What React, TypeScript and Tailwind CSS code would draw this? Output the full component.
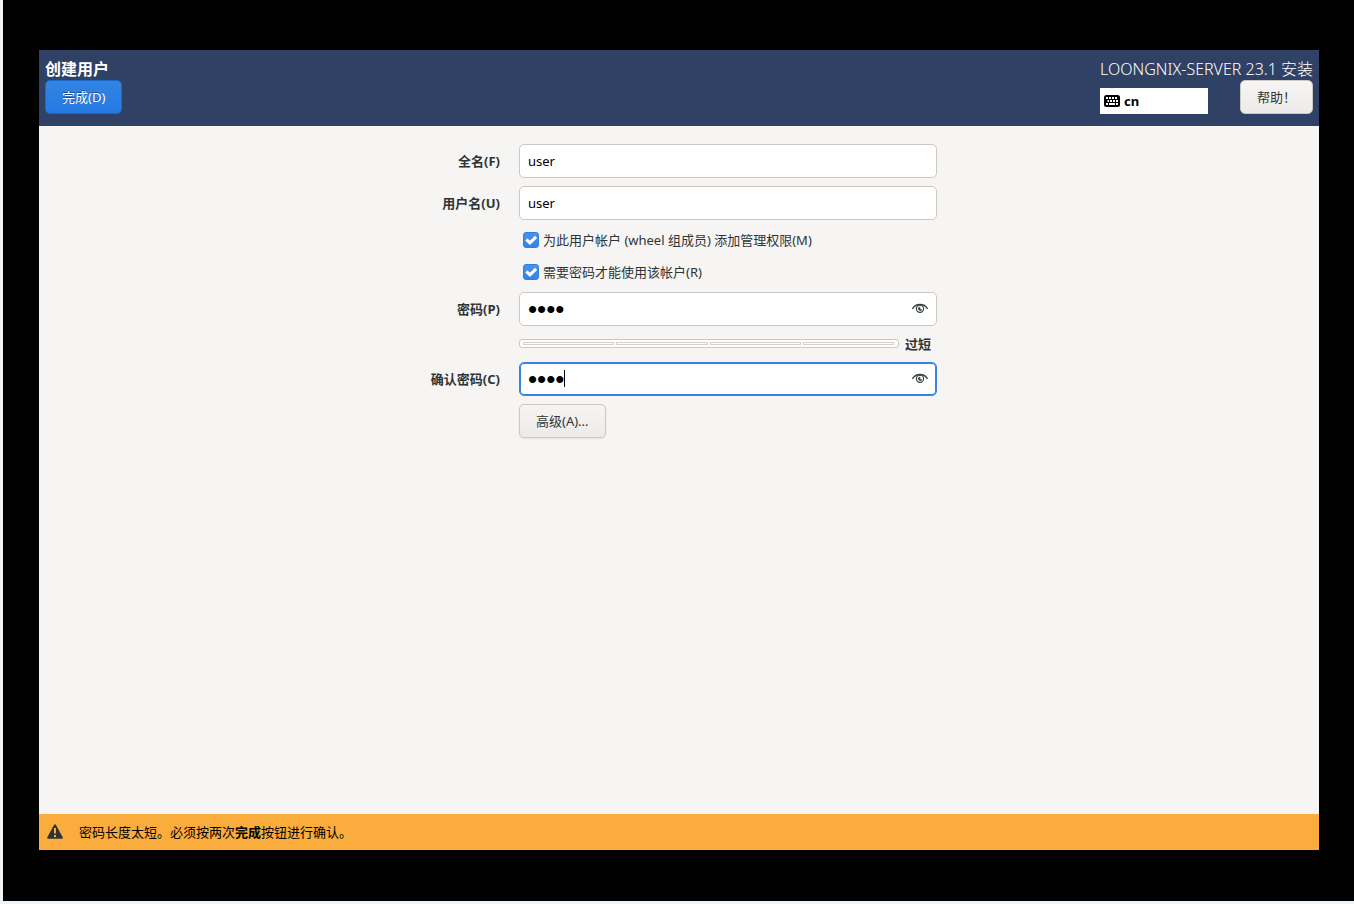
import { useState } from 'react';
import type { InputHTMLAttributes, ReactNode } from 'react';

const STRENGTH_STEPS = [1, 2, 3, 4];

function KeyboardIcon() {
  return (
    <svg width="16" height="12" viewBox="0 0 16 12" aria-hidden="true">
      <rect width="16" height="12" rx="2.500" fill="#000" />
      <path
        d="M2 2h2v2H2zM5 2h2v2H5zM8 2h2v2H8zM11 2h2v2h-2zM3.500 5h1.500v2H3.500zM6 5h2v2H6zM9 5h2v2H9zM12 5h2v2h-2zM2 8h2v2H2zM5 8h6v2H5zM12 8h2v2h-2z"
        fill="#fff"
      />
    </svg>
  );
}

function EyeIcon() {
  return (
    <svg width="16" height="16" viewBox="0 0 16 16" fill="none" stroke="#3d4345" aria-hidden="true">
      <path d="M.4 8.900C2 6 4.700 4.500 8 4.500s6 1.500 7.600 4.400" strokeWidth="1.400" />
      <circle cx="8" cy="8.800" r="3.600" strokeWidth="1.200" />
      <path d="M8.300 6.700a2.100 2.100 0 1 0 1.900 2.500H8.300z" fill="#3d4345" stroke="none" />
    </svg>
  );
}

function WarningIcon() {
  return (
    <svg width="16" height="16" viewBox="0 0 16 16" aria-hidden="true">
      <path
        d="M8 .3c.5 0 .8.2 1 .6l6.700 12.300c.4.8 0 1.500-.8 1.500H1.100c-.8 0-1.200-.7-.8-1.500L7 .9c.2-.4.5-.6 1-.6z"
        fill="#2e3436"
      />
      <path d="M7 4h2v5.500H7zM7 11h2v2H7z" fill="#faac3d" />
    </svg>
  );
}

interface FieldProps extends InputHTMLAttributes<HTMLInputElement> {
  id: string;
  label: string;
  children?: ReactNode;
}

function Field({ id, label, children, className = '', type = 'text', ...props }: FieldProps) {
  // larger bullets while the value is masked
  const masked = type === 'password' ? "font-['Liberation_Sans',sans-serif] text-[26px]" : '';

  return (
    <>
      <label htmlFor={id} className="text-right font-bold whitespace-nowrap">
        {label}
      </label>
      <div className="relative">
        <input
          id={id}
          type={type}
          className={`block h-[34px] w-full rounded-[5px] border bg-white px-2 text-black outline-none ${masked} ${className}`}
          {...props}
        />
        {children}
      </div>
    </>
  );
}

function RevealButton({ onClick }: { onClick: () => void }) {
  return (
    <button
      type="button"
      onClick={onClick}
      aria-label="显示密码"
      className="absolute top-2 right-[9px] size-4"
    >
      <EyeIcon />
    </button>
  );
}

function CheckOption({ id, label }: { id: string; label: string }) {
  return (
    <div className="col-start-2 flex h-6 items-center gap-1 pl-1">
      <span className="relative size-4">
        <input
          id={id}
          type="checkbox"
          defaultChecked
          className="peer block size-4 appearance-none rounded-[3px] border border-[#cdc7c2] bg-white checked:border-[#2f7fe0] checked:bg-linear-to-b checked:from-[#4b92ea] checked:to-[#3584e4]"
        />
        <svg
          viewBox="0 0 16 16"
          className="pointer-events-none absolute inset-0 hidden size-4 peer-checked:block"
          aria-hidden="true"
        >
          <path d="M3.300 7.300l3.600 3.500 6.200-6" fill="none" stroke="#fff" strokeWidth="3" />
        </svg>
      </span>
      <label htmlFor={id} className="whitespace-nowrap">
        {label}
      </label>
    </div>
  );
}

export default function App() {
  const [showPassword, setShowPassword] = useState(false);
  const [showConfirm, setShowConfirm] = useState(false);

  return (
    <div className="flex min-h-screen bg-[#eff3f6] pb-[3px] pl-[3px] font-['Noto_Sans','Noto_Sans_CJK_SC',sans-serif] text-[13px] leading-5 text-[#2e3436]">
      <div className="flex flex-1 bg-black pt-[50px] pr-[35px] pb-[51px] pl-9">
        <div className="flex flex-1 flex-col bg-[#f6f5f4]">
          <header className="flex h-[76px] items-start justify-between bg-[#2f4164] px-1.5 pt-2">
            <div className="flex flex-col items-start">
              <h1 className="text-base leading-[22px] font-bold text-white">创建用户</h1>
              <button
                type="button"
                className="h-[34px] rounded-[5px] border border-[#1b6acb] bg-linear-to-b from-[#3584e4] to-[#2379e2] px-4 text-white text-shadow-[0_-1px_rgb(0_0_0/0.4)]"
              >
                完成(D)
              </button>
            </div>
            <div>
              <p className="text-base leading-[22px] font-light text-white">LOONGNIX-SERVER 23.1 安装</p>
              <div className="flex items-start justify-between">
                <div className="mt-2 flex h-[26px] w-[108px] items-center gap-1 bg-white px-1 font-bold text-black">
                  <KeyboardIcon />
                  cn
                </div>
                <button
                  type="button"
                  className="h-[34px] rounded-[5px] border border-[#cdc7c2] bg-linear-to-b from-[#f6f5f4] to-[#edebe9] px-4"
                >
                  帮助！
                </button>
              </div>
            </div>
          </header>

          <form
            className="mx-auto grid w-full max-w-[516px] flex-1 grid-cols-[79px_1fr] content-start items-center gap-x-[19px] gap-y-2 pt-[18px]"
            onSubmit={(e) => e.preventDefault()}
          >
            <Field id="fullname" label="全名(F)" defaultValue="user" className="border-[#cdc7c2]" />
            <Field id="username" label="用户名(U)" defaultValue="user" className="border-[#cdc7c2]" />
            <CheckOption id="admin" label="为此用户帐户 (wheel 组成员) 添加管理权限(M)" />
            <CheckOption id="require-password" label="需要密码才能使用该帐户(R)" />
            <Field
              id="password"
              label="密码(P)"
              type={showPassword ? 'text' : 'password'}
              defaultValue="user"
              className="border-[#cdc7c2]"
            >
              <RevealButton onClick={() => setShowPassword(!showPassword)} />
            </Field>
            <div className="col-start-2 flex h-5 items-center gap-1.5">
              <div
                role="meter"
                aria-valuenow={0}
                aria-valuemin={0}
                aria-valuemax={4}
                aria-label="密码强度"
                className="mb-px flex h-[9px] w-[380px] items-center gap-0.5 rounded-[3px] border border-[#cdc7c2] bg-white pr-1 pl-[3px]"
              >
                {STRENGTH_STEPS.map((step) => (
                  <span key={step} className="h-[3px] flex-1 border border-[#d5d0cc]" />
                ))}
              </div>
              <span className="font-bold">过短</span>
            </div>
            <Field
              id="confirm"
              label="确认密码(C)"
              type={showConfirm ? 'text' : 'password'}
              defaultValue="user"
              className="border-[#3584e4] caret-transparent inset-ring inset-ring-[#3584e4]"
            >
              <span className="absolute top-2 left-[45px] h-[17px] w-px bg-black" />
              <RevealButton onClick={() => setShowConfirm(!showConfirm)} />
            </Field>
            <button
              type="button"
              className="col-start-2 h-[34px] justify-self-start rounded-[5px] border border-[#cdc7c2] bg-linear-to-b from-[#f6f5f4] to-[#edebe9] px-4 shadow-[0_1px_2px_rgb(0_0_0/0.07)]"
            >
              高级(A)...
            </button>
          </form>

          <footer className="flex h-9 items-center gap-4 bg-[#faac3d] px-2 text-black">
            <WarningIcon />
            <p>
              密码长度太短。必须按两次<b>完成</b>按钮进行确认。
            </p>
          </footer>
        </div>
      </div>
    </div>
  );
}
